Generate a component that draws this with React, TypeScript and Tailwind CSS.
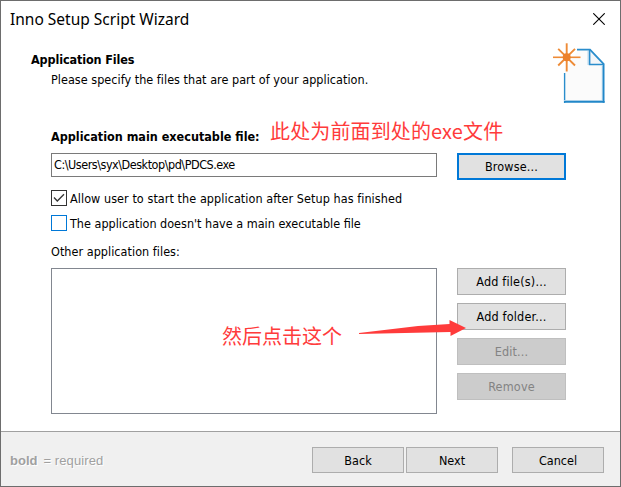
import type { ReactNode } from 'react';

function SideButton({ children, kind = 'normal' }: { children: ReactNode; kind?: 'normal' | 'focus' | 'off' }) {
  const look =
    kind === 'focus'
      ? 'border-2 border-[#0078d7] bg-[#e1e1e1] text-black'
      : kind === 'off'
        ? 'border border-[#bfbfbf] bg-[#cccccc] text-[#838383]'
        : 'border border-[#adadad] bg-[#e1e1e1] text-black';
  return (
    <button className={`flex h-[27px] w-[109px] items-center justify-center tracking-[0.18px] ${look}`}>
      {children}
    </button>
  );
}

function NavButton({ children }: { children: ReactNode }) {
  return (
    <button className="flex h-[26px] w-[92px] items-center justify-center border border-[#adadad] bg-[#e1e1e1] pt-px text-black">
      {children}
    </button>
  );
}

function DocumentIcon() {
  return (
    <svg className="block h-[61px] w-[54px]" viewBox="0 0 54 61" fill="none">
      <path d="M11 30V60H51V22L37 7H25L11 30Z" fill="#fbfbfb" />
      <path d="M37 7V22H51Z" fill="#f3f6f9" />
      <path d="M11.6 30V60" stroke="#2a8dcc" strokeWidth="1.4" />
      <path d="M11 57.5H50" stroke="#a9cfe8" strokeWidth="1" />
      <path d="M11 58.9H51.6" stroke="#2187c9" strokeWidth="1.9" />
      <path d="M49.3 23V58" stroke="#a9cfe8" strokeWidth="1" />
      <path d="M50.6 59.800V21" stroke="#2187c9" strokeWidth="1.8" />
      <path d="M24 6.6H37L51 21.3" stroke="#2a8dcc" strokeWidth="1.8" />
      <path d="M36.600 6.500V21.500H51" stroke="#2a8dcc" strokeWidth="1.6" />
      <path d="M35.2 8V22" stroke="#a9cfe8" strokeWidth="1.2" />
      <g stroke="#ee8b36">
        <path d="M13.700 0.3V28.500" strokeWidth="1.9" />
        <path d="M0 14.300H27.500" strokeWidth="1.6" />
        <path d="M5.2 5.900L22 22.500M22 5.900L5.200 22.500" strokeWidth="1.9" />
      </g>
      <circle cx="13.7" cy="14.2" r="4" fill="#ec812b" />
    </svg>
  );
}

export default function App() {
  return (
    <div className="relative flex h-[487px] w-[621px] flex-col overflow-hidden border border-[#6d6d6d] bg-white font-['DejaVu_Sans_Condensed','DejaVu_Sans',sans-serif] text-[12.5px] leading-[16px] text-black [font-stretch:condensed]">
      <header className="flex h-[37px] shrink-0 items-center justify-between pb-px pl-[9px] pr-[15px]">
        <h1 className="font-['Noto_Sans',sans-serif] text-[15.5px] leading-[20px]">Inno Setup Script Wizard</h1>
        <svg className="h-3 w-3" viewBox="0 0 12 12" stroke="#000" strokeWidth="1.1">
          <path d="M0.3 0.3L11.7 11.7M11.7 0.3L0.3 11.7" />
        </svg>
      </header>

      <div className="flex h-[90px] shrink-0 justify-between pl-[30px] pr-[13px]">
        <div className="pt-[14px]">
          <h2 className="font-bold tracking-[-0.12px]">Application Files</h2>
          <p className="mt-1 pl-5 tracking-[0.03px]">Please specify the files that are part of your application.</p>
        </div>
        <div className="pt-[5px]">
          <DocumentIcon />
        </div>
      </div>

      <main className="flex h-[303px] shrink-0 flex-col pl-[50px]">
        <div className="flex h-[25px]">
          <span className="pt-[1px] font-bold">Application main executable file:</span>
        </div>
        <div className="flex h-[37px] gap-5">
          <input
            readOnly
            className="h-6 w-[386px] border border-[#7a7a7a] bg-white px-[2px] pb-[2px] tracking-[-0.47px] outline-none"
            value="C:\Users\syx\Desktop\pd\PDCS.exe"
          />
          <SideButton kind="focus">Browse...</SideButton>
        </div>
        <label className="flex h-[25px] items-start gap-[3px]">
          <span className="flex h-4 w-4 items-center justify-center border border-[#333]">
            <svg className="h-3 w-3" viewBox="0 0 12 12" fill="none" stroke="#333" strokeWidth="1.3">
              <path d="M1 5.5L4.3 9L11 2.3" />
            </svg>
          </span>
          <span className="pt-px tracking-[0.065px]">Allow user to start the application after Setup has finished</span>
        </label>
        <label className="flex h-[28px] items-start gap-[3px]">
          <span className="h-4 w-4 border border-[#0078d7]" />
          <span className="pt-px">The application doesn't have a main executable file</span>
        </label>
        <span className="h-[25px] pt-px tracking-[0.04px]">Other application files:</span>
        <div className="flex gap-5">
          <div className="h-[146px] w-[386px] border border-[#828790] bg-white" />
          <div className="flex flex-col gap-2">
            <SideButton>Add file(s)...</SideButton>
            <SideButton>Add folder...</SideButton>
            <SideButton kind="off">Edit...</SideButton>
            <SideButton kind="off">Remove</SideButton>
          </div>
        </div>
      </main>

      <footer className="flex flex-1 items-start justify-between border-t border-[#a0a0a0] bg-[#f0f0f0] pl-[9px] pr-[16px] pt-[15px]">
        <div className="flex gap-[6px] pt-[6px] font-['Liberation_Sans',sans-serif] text-[13px] text-[#a0a0a0] [text-shadow:1px_1px_0_#fff]">
          <b>bold</b>
          <span className="tracking-[0.1px]">= required</span>
        </div>
        <div className="flex">
          <NavButton>Back</NavButton>
          <div className="ml-[2px] mr-[14px]">
            <NavButton>Next</NavButton>
          </div>
          <NavButton>Cancel</NavButton>
        </div>
      </footer>

      <div className="absolute left-[269px] top-[118px] whitespace-nowrap font-['Noto_Sans_CJK_SC',sans-serif] text-[20px] leading-[24px] tracking-[0.13px] text-[#ff3b3b]">
        此处为前面到处的exe文件
      </div>
      <div className="absolute left-[221px] top-[323px] whitespace-nowrap font-['Noto_Sans_CJK_SC',sans-serif] text-[20px] leading-[24px] text-[#ff3b3b]">
        然后点击这个
      </div>
      <svg className="absolute left-[357px] top-[318px] h-5 w-[110px]" viewBox="0 0 110 20">
        <path d="M1 14L60 7L91.500 5V1L108 9L92.500 17V13L1 15Z" fill="#ff3b3b" />
      </svg>
    </div>
  );
}
